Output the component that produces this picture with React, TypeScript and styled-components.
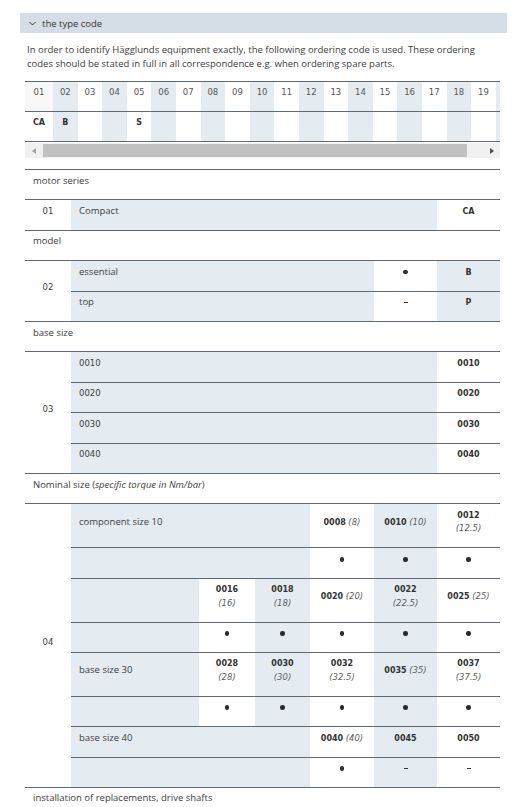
import React from "react";
import styled, { createGlobalStyle } from "styled-components";

const SHADE = "#e4ecf2";
const RULE = "#5f6a72";
const DIGITS = `"DejaVu Sans", Verdana, sans-serif`;

const GlobalStyle = createGlobalStyle`
  html, body {
    margin: 0;
    padding: 0;
    background: #fff;
  }
  body {
    font-family: "Open Sans", "Noto Sans", sans-serif;
    color: #3f3f3f;
  }
`;

const Page = styled.div`
  width: 487px;
  padding: 13px 0 0 20px;
`;

const AccordionHead = styled.div`
  height: 20px;
  display: flex;
  align-items: center;
  gap: 6px;
  padding-left: 9px;
  background: #d5dee6;
  font-size: 9.5px;
  color: #333;
`;

const Body = styled.div`
  padding: 0 7px 0 5px;
`;

const Intro = styled.p`
  margin: 10px 0 10px 2px;
  font-size: 9.5px;
  line-height: 14px;
  color: #3d3d3d;
`;

const CodeScroll = styled.div`
  width: 475px;
  overflow: hidden;
`;

const CodeTable = styled.table`
  width: 500px;
  border-collapse: collapse;
  table-layout: fixed;
  font-family: ${DIGITS};
`;

const CodeRow = styled.tr<{ $head?: boolean }>`
  border-top: 1px solid ${RULE};
  border-bottom: 1px solid ${RULE};
  & > td:first-child {
    background: ${({ $head }) => ($head ? "#f8f8f8" : "#fff")};
  }
`;

const CodeCell = styled.td<{ $w: number; $strong?: boolean }>`
  width: ${({ $w }) => $w}px;
  padding: 4px 0 11.6px;
  line-height: 13.4px;
  text-align: center;
  font-weight: ${({ $strong }) => ($strong ? 700 : 400)};
  font-size: ${({ $strong }) => ($strong ? "8px" : "8.5px")};
  color: ${({ $strong }) => ($strong ? "#333" : "#555")};
  &:nth-child(even) {
    background: ${SHADE};
  }
`;

/* classic scrollbar under the code strip */
const ScrollBar = styled.div`
  width: 475px;
  height: 15px;
  margin-top: 1px;
  display: flex;
  background: #f1f1f1;
`;

const ScrollButton = styled.div<{ $dir: "left" | "right" }>`
  width: 17px;
  display: flex;
  align-items: center;
  justify-content: center;
  &::before {
    content: "";
    width: 0;
    height: 0;
    border-top: 3.5px solid transparent;
    border-bottom: 3.5px solid transparent;
    ${({ $dir }) =>
      $dir === "left"
        ? `border-right: 4px solid #a3a3a3;`
        : `border-left: 4px solid #505050;`}
  }
`;

const ScrollTrack = styled.div`
  flex: 1;
  display: flex;
  align-items: center;
`;

const ScrollThumb = styled.div`
  width: 424px;
  height: 13px;
  margin-left: 1px;
  background: #c1c1c1;
`;

const SpecTable = styled.table`
  width: 475px;
  margin-top: 11px;
  border-collapse: collapse;
  table-layout: fixed;
  color: #3d3d3d;
`;

const Col = styled.col<{ $w: number }>`
  width: ${({ $w }) => $w}px;
`;

const Row = styled.tr`
  border-top: 1px solid ${RULE};
  border-bottom: 1px solid ${RULE};
`;

type Font = "text" | "digits" | "value";

const Cell = styled.td<{ $shade?: boolean; $center?: boolean; $font?: Font }>`
  padding: ${({ $font }) => ($font && $font !== "text" ? "4.5px 8px 11.5px" : "3.5px 8px 12.5px")};
  line-height: 13.4px;
  vertical-align: middle;
  text-align: ${({ $center }) => ($center ? "center" : "left")};
  background: ${({ $shade }) => ($shade ? SHADE : "#fff")};
  font-family: ${({ $font }) => ($font && $font !== "text" ? DIGITS : "inherit")};
  font-size: ${({ $font }) => ($font === "digits" ? "8.5px" : $font === "value" ? "8px" : "9.5px")};
`;

const Code = styled.b`
  font-weight: 700;
  color: #333;
`;

const Torque = styled.i`
  font-size: 8.5px;
  color: #5c5c5c;
`;

const Dot = styled.span`
  display: inline-block;
  width: 4.5px;
  height: 4.5px;
  border-radius: 50%;
  background: #2a2a2a;
  vertical-align: middle;
`;

const Dash = styled.span`
  display: inline-block;
  width: 4px;
  height: 1px;
  background: #333;
  vertical-align: middle;
`;

const Chevron = () => (
  <svg width="7" height="5" viewBox="0 0 7 5">
    <path d="M0.5 1 L3.5 4 L6.5 1" fill="none" stroke="#333" strokeWidth="1" />
  </svg>
);

type ValueProps = { code: string; torque?: string; stack?: boolean };

const Value: React.FC<ValueProps> = ({ code, torque, stack }) => (
  <>
    <Code>{code}</Code>
    {torque && (
      <>
        {stack ? <br /> : " "}
        <Torque>({torque})</Torque>
      </>
    )}
  </>
);

const positions = Array.from({ length: 19 }, (_, i) => String(i + 1).padStart(2, "0"));
const ordered: Record<number, string> = { 0: "CA", 1: "B", 4: "S" };

const widthOf = (i: number) => (i === 0 ? 28 : i === 19 ? 29.2 : 24.6);

const LabelRow: React.FC<{ children: React.ReactNode }> = ({ children }) => (
  <Row>
    <Cell colSpan={7}>{children}</Cell>
  </Row>
);

export default function App() {
  return (
    <Page>
      <GlobalStyle />
      <AccordionHead>
        <Chevron />
        the type code
      </AccordionHead>
      <Body>
        <Intro>
          In order to identify Hägglunds equipment exactly, the following ordering code is used. These ordering
          codes should be stated in full in all correspondence e.g. when ordering spare parts.
        </Intro>

        <CodeScroll>
          <CodeTable>
            <tbody>
              <CodeRow $head>
                {[...positions, ""].map((p, i) => (
                  <CodeCell key={i} $w={widthOf(i)}>
                    {p}
                  </CodeCell>
                ))}
              </CodeRow>
              <CodeRow>
                {[...positions, ""].map((_, i) => (
                  <CodeCell key={i} $w={widthOf(i)} $strong>
                    {ordered[i] ?? ""}
                  </CodeCell>
                ))}
              </CodeRow>
            </tbody>
          </CodeTable>
        </CodeScroll>
        <ScrollBar>
          <ScrollButton $dir="left" />
          <ScrollTrack>
            <ScrollThumb />
          </ScrollTrack>
          <ScrollButton $dir="right" />
        </ScrollBar>

        <SpecTable>
          <colgroup>
            <Col $w={46} />
            <Col $w={128} />
            <Col $w={56} />
            <Col $w={55} />
            <Col $w={64} />
            <Col $w={63} />
            <Col $w={63} />
          </colgroup>
          <tbody>
            <LabelRow>motor series</LabelRow>
            <Row>
              <Cell $center $font="digits">01</Cell>
              <Cell $shade colSpan={5}>Compact</Cell>
              <Cell $center $font="value"><Code>CA</Code></Cell>
            </Row>

            <LabelRow>model</LabelRow>
            <Row>
              <Cell $center $font="digits" rowSpan={2}>02</Cell>
              <Cell $shade colSpan={4}>essential</Cell>
              <Cell $center $font="value"><Dot /></Cell>
              <Cell $center $shade $font="value"><Code>B</Code></Cell>
            </Row>
            <Row>
              <Cell $shade colSpan={4}>top</Cell>
              <Cell $center $font="value"><Dash /></Cell>
              <Cell $center $shade $font="value"><Code>P</Code></Cell>
            </Row>

            <LabelRow>base size</LabelRow>
            {["0010", "0020", "0030", "0040"].map((size, i) => (
              <Row key={size}>
                {i === 0 && (
                  <Cell $center $font="digits" rowSpan={4}>03</Cell>
                )}
                <Cell $shade $font="digits" colSpan={5}>{size}</Cell>
                <Cell $center $font="value"><Code>{size}</Code></Cell>
              </Row>
            ))}

            <LabelRow>
              Nominal size (<i>specific torque in Nm/bar</i>)
            </LabelRow>
            <Row>
              <Cell $center $font="digits" rowSpan={8}>04</Cell>
              <Cell $shade colSpan={3}>component size 10</Cell>
              <Cell $center $font="value"><Value code="0008" torque="8" /></Cell>
              <Cell $center $shade $font="value"><Value code="0010" torque="10" /></Cell>
              <Cell $center $font="value"><Value code="0012" torque="12.5" stack /></Cell>
            </Row>
            <Row>
              <Cell $shade colSpan={3} />
              <Cell $center $font="value"><Dot /></Cell>
              <Cell $center $shade $font="value"><Dot /></Cell>
              <Cell $center $font="value"><Dot /></Cell>
            </Row>
            <Row>
              <Cell $shade />
              <Cell $center $font="value"><Value code="0016" torque="16" stack /></Cell>
              <Cell $center $shade $font="value"><Value code="0018" torque="18" stack /></Cell>
              <Cell $center $font="value"><Value code="0020" torque="20" /></Cell>
              <Cell $center $shade $font="value"><Value code="0022" torque="22.5" stack /></Cell>
              <Cell $center $font="value"><Value code="0025" torque="25" /></Cell>
            </Row>
            <Row>
              <Cell $shade />
              <Cell $center $font="value"><Dot /></Cell>
              <Cell $center $shade $font="value"><Dot /></Cell>
              <Cell $center $font="value"><Dot /></Cell>
              <Cell $center $shade $font="value"><Dot /></Cell>
              <Cell $center $font="value"><Dot /></Cell>
            </Row>
            <Row>
              <Cell $shade>base size 30</Cell>
              <Cell $center $font="value"><Value code="0028" torque="28" stack /></Cell>
              <Cell $center $shade $font="value"><Value code="0030" torque="30" stack /></Cell>
              <Cell $center $font="value"><Value code="0032" torque="32.5" stack /></Cell>
              <Cell $center $shade $font="value"><Value code="0035" torque="35" /></Cell>
              <Cell $center $font="value"><Value code="0037" torque="37.5" stack /></Cell>
            </Row>
            <Row>
              <Cell $shade />
              <Cell $center $font="value"><Dot /></Cell>
              <Cell $center $shade $font="value"><Dot /></Cell>
              <Cell $center $font="value"><Dot /></Cell>
              <Cell $center $shade $font="value"><Dot /></Cell>
              <Cell $center $font="value"><Dot /></Cell>
            </Row>
            <Row>
              <Cell $shade colSpan={3}>base size 40</Cell>
              <Cell $center $font="value"><Value code="0040" torque="40" /></Cell>
              <Cell $center $shade $font="value"><Value code="0045" /></Cell>
              <Cell $center $font="value"><Value code="0050" /></Cell>
            </Row>
            <Row>
              <Cell $shade colSpan={3} />
              <Cell $center $font="value"><Dot /></Cell>
              <Cell $center $shade $font="value"><Dash /></Cell>
              <Cell $center $font="value"><Dash /></Cell>
            </Row>

            <LabelRow>installation of replacements, drive shafts</LabelRow>
          </tbody>
        </SpecTable>
      </Body>
    </Page>
  );
}
